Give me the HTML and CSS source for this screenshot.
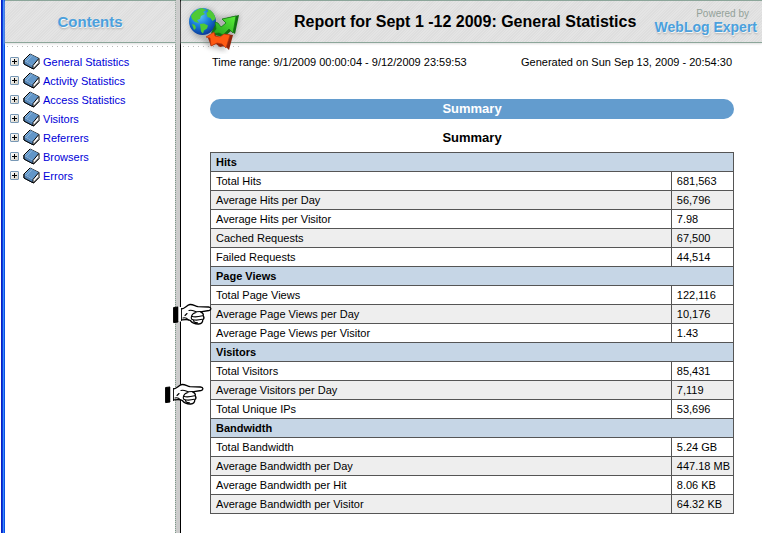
FILE: index.html
```
<!DOCTYPE html>
<html lang="en">
<head>
<meta charset="utf-8">
<title>Report for Sept 1 -12 2009: General Statistics</title>
<link rel="stylesheet" href="styles.css">
</head>
<body>
<svg class="defs" aria-hidden="true">
  <defs>
    <symbol id="book" viewBox="0 0 17 17">
      <path d="M7 1 16 5.500v5l-5.500 5.500L1 11V7z" fill="#fff" stroke="#000" stroke-width="1"/>
      <path d="M7 1 15.800 5.500 10 12.500 1.200 7.500z" fill="#6296c8"/>
      <path d="M1 7.500l9 5V16L1 11.200z" fill="#5584b4"/>
      <path d="M7 1.500 2 7.200M3.600 8.600 9 2.600" stroke="#a4c8e8" stroke-width=".7"/>
      <path d="m10 12.500 5.800-7M10 12.500V16M7 1 1 7v4l9.500 5 5.500-5.500" fill="none" stroke="#000" stroke-width="1"/>
      <path d="m11.500 13.800 3.800-4" stroke="#999" stroke-width=".7"/>
    </symbol>
    <symbol id="hand" viewBox="0 0 40 24">
      <path d="M8 7c4 0 5.500-4 9-4.500 3-.2 5 1.500 8 2.200l10.500.3c3 .3 3.200 3 .5 3.500l-8.500 1.300c2.500 1 3.200 2.300 2.700 4 1 1.300.8 3-.4 4 0 2.500-1.500 4-4 4.200-4 .2-6.500-1-8.500-3.500-2-1.500-5-1-9.300-.5z" fill="#fff" stroke="#000" stroke-width="1.300" stroke-linejoin="round"/>
      <path d="M16 8.500c3-1.200 5 .8 7.500 1.200l4-.2M23 10.500c-2.500.6-4 1.800-4.500 3.700 2.500 1 7 .6 11-.5M18.500 14.500c-.6 1.800 0 3 1.700 3.300 3 .6 6 .3 9-.5M20.500 18c0 1.800 1.500 2.800 4 2.800M10 16c2.500-.8 4 .2 5.500 2M14 11.500l-2 2" fill="none" stroke="#000" stroke-width="1.100" stroke-linecap="round"/>
      <path d="M.6 5.500 5 5v15l-4.400.6z" fill="#000" stroke="#000"/>
      <path d="M5.500 5H8v14.500H5.500z" fill="#fff"/>
      <path d="M8.500 6v13" stroke="#000" stroke-width=".7"/>
    </symbol>
  </defs>
</svg>
<div class="frames">
  <nav class="contents" aria-label="Contents">
    <header class="bar bar-contents"><h2 class="contents-title">Contents</h2></header>
    <ul class="tree">
      <li><button class="expand" aria-label="Expand General Statistics"></button><svg class="book"><use href="#book"/></svg><a href="#general">General Statistics</a></li>
      <li><button class="expand" aria-label="Expand Activity Statistics"></button><svg class="book"><use href="#book"/></svg><a href="#activity">Activity Statistics</a></li>
      <li><button class="expand" aria-label="Expand Access Statistics"></button><svg class="book"><use href="#book"/></svg><a href="#access">Access Statistics</a></li>
      <li><button class="expand" aria-label="Expand Visitors"></button><svg class="book"><use href="#book"/></svg><a href="#visitors">Visitors</a></li>
      <li><button class="expand" aria-label="Expand Referrers"></button><svg class="book"><use href="#book"/></svg><a href="#referrers">Referrers</a></li>
      <li><button class="expand" aria-label="Expand Browsers"></button><svg class="book"><use href="#book"/></svg><a href="#browsers">Browsers</a></li>
      <li><button class="expand" aria-label="Expand Errors"></button><svg class="book"><use href="#book"/></svg><a href="#errors">Errors</a></li>
    </ul>
  </nav>
  <div class="splitter"></div>
  <main class="report">
    <header class="bar bar-report">
      <svg class="logo" viewBox="0 0 60 54" aria-hidden="true">
        <defs>
          <radialGradient id="sea" cx=".4" cy=".3" r=".7"><stop offset="0" stop-color="#5ec4f8"/><stop offset=".5" stop-color="#1b7fdc"/><stop offset="1" stop-color="#0a3c9c"/></radialGradient>
          <linearGradient id="green" x1="0" y1="1" x2="1" y2="0"><stop offset="0" stop-color="#1f9c1c"/><stop offset="1" stop-color="#5cf03a"/></linearGradient>
          <filter id="soft" x="-20%" y="-20%" width="140%" height="140%"><feGaussianBlur stdDeviation="2.500"/></filter>
        </defs>
        <path d="M7 24a14 14 0 0 1 27-7l23-2-5 21-7 3-3 12-17-4-6-8C11 38 7 32 7 24z" fill="#777" opacity=".45" filter="url(#soft)"/>
        <circle cx="19.500" cy="21.500" r="13.500" fill="url(#sea)"/>
        <path d="M8 16c2-4 6-7 11-8l4 2-3 2 2 2-4 2-1 3-3 1 2 3-4-1-3-3zM23 9l4 1c3 2 5 5 5.500 9l-3 2-2-3-3-1-1-4 2-2zM17 24l4-.5 4 2-1 3-3 2-1 3-2-2zM9 24l3 1 1 3-2 2z" fill="#4fca35"/>
        <path d="m33 23 5 5 5-5-4-4 17-4-4 19-4-3-7 6-10-2-3-2z" fill="#137012"/>
        <path d="m32 22 3 1 3 4 5-4-4-4 14-3-3 17-4-4-6 6-4-2-7 1 4-5z" fill="url(#green)" stroke="#127016" stroke-width=".7"/>
        <path d="m25 38 7-5 1 3 5 1 4-3 8 1-4 15-4-4-5 1-4-3-5 2z" fill="#8f250c"/>
        <path d="m23 37 8-5 1 4 5 1 4-3 6 1-4 13-4-4-5-1-6 3-1-8z" fill="#ff5a13" stroke="#b6340d" stroke-width=".7"/>
      </svg>
      <h1 class="report-title">Report for Sept 1 -12 2009: General Statistics</h1>
      <a class="brand" href="#brand"><span class="powered">Powered by</span><span class="product">WebLog Expert</span></a>
    </header>
    <div class="report-body">
      <div class="meta"><span>Time range: 9/1/2009 00:00:04 - 9/12/2009 23:59:53</span><span>Generated on Sun Sep 13, 2009 - 20:54:30</span></div>
      <h2 class="section">Summary</h2>
      <table class="stats">
        <caption>Summary</caption>
        <tbody>
          <tr><th colspan="2">Hits</th></tr>
          <tr><td>Total Hits</td><td>681,563</td></tr>
          <tr class="alt"><td>Average Hits per Day</td><td>56,796</td></tr>
          <tr><td>Average Hits per Visitor</td><td>7.98</td></tr>
          <tr class="alt"><td>Cached Requests</td><td>67,500</td></tr>
          <tr><td>Failed Requests</td><td>44,514</td></tr>
          <tr><th colspan="2">Page Views</th></tr>
          <tr><td>Total Page Views</td><td>122,116</td></tr>
          <tr class="alt"><td>Average Page Views per Day</td><td>10,176</td></tr>
          <tr><td>Average Page Views per Visitor</td><td>1.43</td></tr>
          <tr><th colspan="2">Visitors</th></tr>
          <tr><td>Total Visitors</td><td>85,431</td></tr>
          <tr class="alt"><td>Average Visitors per Day</td><td>7,119</td></tr>
          <tr><td>Total Unique IPs</td><td>53,696</td></tr>
          <tr><th colspan="2">Bandwidth</th></tr>
          <tr><td>Total Bandwidth</td><td>5.24 GB</td></tr>
          <tr class="alt"><td>Average Bandwidth per Day</td><td>447.18 MB</td></tr>
          <tr><td>Average Bandwidth per Hit</td><td>8.06 KB</td></tr>
          <tr class="alt"><td>Average Bandwidth per Visitor</td><td>64.32 KB</td></tr>
        </tbody>
      </table>
    </div>
    <svg class="hand hand-views" aria-hidden="true"><use href="#hand"/></svg>
    <svg class="hand hand-visitors" aria-hidden="true"><use href="#hand"/></svg>
  </main>
</div>
</body>
</html>
```
FILE: styles.css
```
* { box-sizing: border-box; }
body {
  margin: 0;
  background: #fff;
  color: #000;
  font: 11px/18px "Liberation Sans", Arial, sans-serif;
}
h1, h2, ul { margin: 0; padding: 0; }
.defs { position: absolute; width: 0; height: 0; }
.frames { display: flex; min-height: 100vh; padding-left: 1px; }

.contents {
  flex: 0 0 174px;
  border-left: 4px solid #0a4fe0;
  border-image: linear-gradient(to right, #0a1fc0 0 1px, #0a3ce0 1px 2px, #3c8cf8 2px 3px, #0a50e8 3px) 0 0 0 4;
}
.splitter {
  flex: 0 0 6px;
  background: #ccc;
  border-left: 1px dotted #7c9888;
  border-right: 1px solid #000;
}
.report { flex: 1; position: relative; min-width: 0; }

.bar {
  position: relative;
  display: flex;
  align-items: center;
  height: 43px;
  border-top: 1px solid #8ca69a;
  border-bottom: 1px solid #8ca69a;
  background: repeating-linear-gradient(135deg, #dedede 0 1px, #e4e4e4 1px 2px);
  box-shadow: 0 1px 2px #ddd;
}
.bar::after {
  content: "";
  position: absolute;
  top: 45px;
  left: 2px;
  right: 0;
  height: 1px;
  background: repeating-linear-gradient(to right, #bbb 0 1px, transparent 1px 5px);
}
.bar-contents { justify-content: center; }
.bar-report::after { right: auto; width: 60px; }
.contents-title, .product {
  color: #4ba0dc;
  font-weight: bold;
  text-shadow: 1px 1px 1px #fff, 1px 2px 2px #aaa;
}
.contents-title { font-size: 15px; }

.tree { list-style: none; padding: 9px 0 0 5px; }
.tree li { display: flex; align-items: center; height: 19px; }
.tree a { color: #0000d8; text-decoration: none; }
.expand {
  width: 9px;
  height: 9px;
  padding: 0;
  border: 1px solid #7898b5;
  border-radius: 1px;
  background:
    linear-gradient(#000, #000) center / 5px 1px no-repeat,
    linear-gradient(#000, #000) center / 1px 5px no-repeat,
    linear-gradient(135deg, #fff, #d4d0c4);
}
.book { width: 17px; height: 17px; margin: 0 3px 0 4px; }

.bar-report { padding: 0 5px 0 8px; }
.logo {
  position: absolute;
  top: -1px;
  left: 2px;
  z-index: 1;
  width: 60px;
  height: 54px;
}
.report-title {
  flex: 1;
  padding-left: 105px;
  font-size: 16px;
  white-space: nowrap;
}
.brand { display: flex; flex-direction: column; text-decoration: none; }
.powered { padding-right: 8px; color: #93a199; font-size: 10px; line-height: 12px; text-align: right; }
.product { font-size: 14px; line-height: 15px; }

.report-body { padding: 10px 28px 19px 29px; }
.meta { display: flex; justify-content: space-between; padding: 0 2px; white-space: nowrap; }
.section {
  margin-top: 28px;
  border-radius: 10px;
  background: #639cce;
  color: #fff;
  font-size: 13px;
  line-height: 20px;
  text-align: center;
}
.stats { width: 100%; margin-top: 10px; border-collapse: collapse; }
.stats caption { padding-bottom: 5px; font-size: 13px; font-weight: bold; }
.stats th, .stats td {
  height: 19px;
  padding: 0 5px;
  border: 1px solid #555;
  text-align: left;
  white-space: nowrap;
}
.stats th { background: #c6d6e6; }
.stats td:last-child:not(:first-child) { width: 62px; padding-right: 3px; }
.stats .alt { background: #eee; }

.hand { position: absolute; width: 40px; height: 24px; }
.hand-views { top: 302px; left: -8px; }
.hand-visitors { top: 382px; left: -16px; }
```
